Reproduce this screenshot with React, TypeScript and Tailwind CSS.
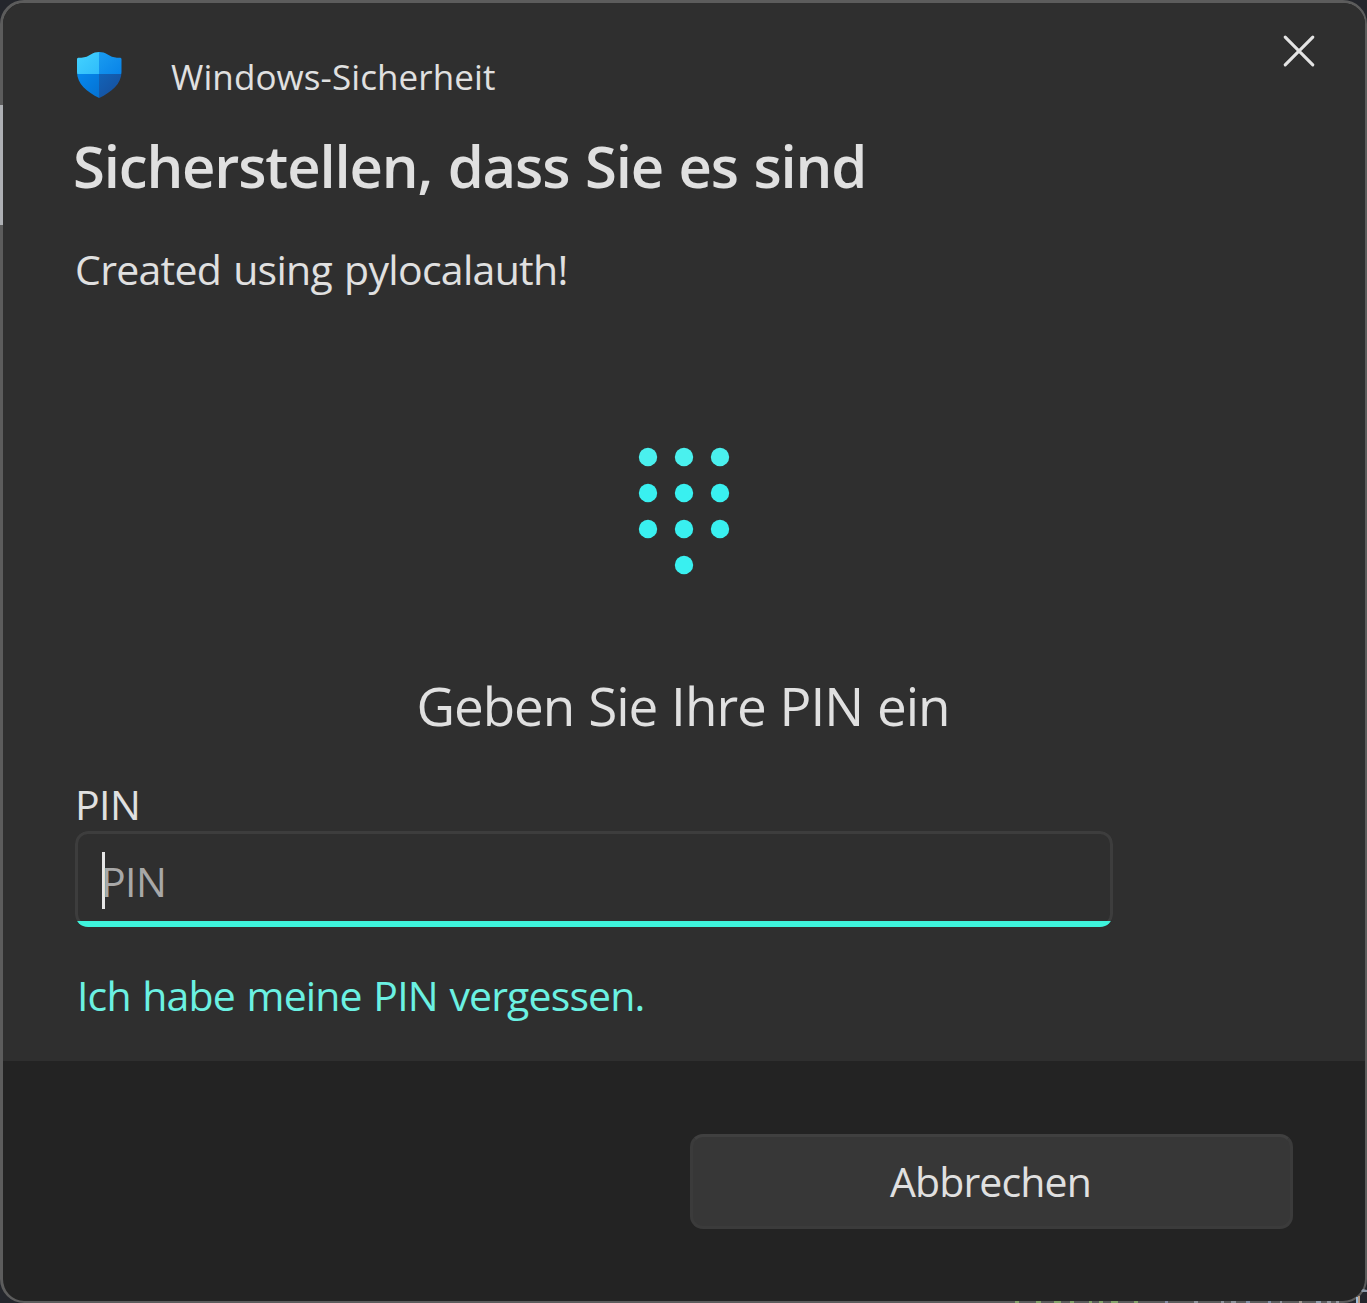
import React from "react";

const dots: [number, number][] = [
  [0, 0], [1, 0], [2, 0],
  [0, 1], [1, 1], [2, 1],
  [0, 2], [1, 2], [2, 2],
  [1, 3],
];

// Slivers of the editor window behind the dialog, visible along its lower edge: x, width, colour
const slivers: [number, number, string][] = [
  [10, 4, "#84a36b"], [31, 5, "#84a36b"], [49, 7, "#84a36b"], [65, 4, "#84a36b"],
  [84, 3, "#84a36b"], [94, 4, "#84a36b"], [106, 7, "#84a36b"], [129, 4, "#84a36b"],
  [160, 3, "#858ca6"], [189, 4, "#8f949c"], [216, 3, "#8f949c"], [226, 5, "#8f949c"],
  [241, 4, "#8290a6"], [263, 3, "#8290a6"], [275, 2, "#8f949c"], [294, 3, "#a09890"],
  [311, 5, "#8f9cab"], [322, 4, "#8f949c"], [331, 3, "#8f949c"],
];

function ShieldIcon() {
  return (
    <svg className="h-[46px] w-[45px] shrink-0" viewBox="0 0 45 46">
      <defs>
        <linearGradient id="tl" x1="0" y1="0" x2="1" y2="1">
          <stop offset="0" stopColor="#44d3ff" />
          <stop offset="1" stopColor="#2fbcfb" />
        </linearGradient>
        <linearGradient id="tr" x1="0" y1="0" x2="1" y2="1">
          <stop offset="0" stopColor="#1a9cf0" />
          <stop offset="1" stopColor="#0883e8" />
        </linearGradient>
        <linearGradient id="bl" x1="0" y1="0" x2="1" y2="1">
          <stop offset="0" stopColor="#0588ee" />
          <stop offset="1" stopColor="#0572d2" />
        </linearGradient>
        <linearGradient id="br" x1="0" y1="0" x2="1" y2="1">
          <stop offset="0" stopColor="#1263b8" />
          <stop offset="1" stopColor="#174c98" />
        </linearGradient>
        <clipPath id="shield">
          <path d="M22.2 0C25.5 0 27.8 0.8 30.2 2.3C33.3 4.3 36.3 5.6 40 5.7L43.4 5.8Q44.5 5.9 44.5 7.2V20C44.5 32 34.5 40 22.2 46C10 40 0 32 0 20V7.2Q0 5.9 1.1 5.8L4.5 5.7C8.2 5.6 11.2 4.3 14.2 2.3C16.6 0.8 19 0 22.2 0Z" />
        </clipPath>
      </defs>
      <g clipPath="url(#shield)">
        <rect width="22" height="22" fill="url(#tl)" />
        <rect x="22" width="23" height="22" fill="url(#tr)" />
        <rect y="22" width="22" height="24" fill="url(#bl)" />
        <rect x="22" y="22" width="23" height="24" fill="url(#br)" />
      </g>
    </svg>
  );
}

export default function App() {
  return (
    <div className="relative h-[1303px] w-[1367px] overflow-hidden bg-[#24262c] font-['Open_Sans',sans-serif] text-[#e0e0e0]">
      <div className="flex h-full flex-col overflow-hidden rounded-[24px] border-t-[3px] border-r-2 border-b-2 border-l-[3px] border-[#5c5c5c] bg-[#232323]">
        <main className="flex h-[1058px] flex-col bg-[#2f2f2f] pl-[72px]">
          <header className="flex h-[97px] justify-between pt-8 pr-[50px]">
            <div className="flex pt-[17px] pl-0.5">
              <ShieldIcon />
              <span className="ml-[49px] h-12 pt-px text-[35px] leading-[48px] tracking-[0.1px] whitespace-nowrap">Windows-Sicherheit</span>
            </div>
            <button aria-label="Schließen" className="h-8 w-8">
              <svg viewBox="0 0 32 32" className="h-8 w-8" stroke="#e4e4e4" strokeWidth="3.1" strokeLinecap="round">
                <path d="M2.2 2.2L29.8 29.8M29.8 2.2L2.2 29.8" />
              </svg>
            </button>
          </header>
          <h1 className="mt-[26px] -ml-0.5 h-20 text-[58px] leading-[80px] font-semibold tracking-[-1.15px] whitespace-nowrap [word-spacing:1.7px]">Sicherstellen, dass Sie es sind</h1>
          <p className="mt-[35px] h-14 text-[41px] leading-[56px] tracking-[-0.7px] whitespace-nowrap [word-spacing:2px]">Created using pylocalauth!</p>
          <div className="mt-[150px] flex pl-[563px]">
            <svg className="h-[128px] w-[92px]" viewBox="0 0 92 128">
              {dots.map(([c, r]) => (
                <circle key={`${c}-${r}`} cx={10 + c * 36} cy={10 + r * 36} r="9.2" fill={r === 0 ? "#4af0ee" : "#39f0f0"} />
              ))}
            </svg>
          </div>
          <h2 className="mt-[95px] h-[72px] pr-[74px] text-center text-[53px] leading-[72px] tracking-[-1px] whitespace-nowrap [word-spacing:1px]">Geben Sie Ihre PIN ein</h2>
          <label className="mt-[38px] h-12 text-[41px] leading-[48px] tracking-[-0.6px]">PIN</label>
          <div className="relative mt-[3px] flex h-24 w-[1038px] items-center overflow-hidden rounded-[13px] pt-0.5 pl-[27px]">
            <span className="absolute inset-0 rounded-[13px] border-[3px] border-[#3d3d3d]" />
            <span className="h-[57px] w-[3px] bg-[#e6e6e6]" />
            <span className="-ml-[4px] pt-[3px] text-[41px] leading-[57px] tracking-[-0.6px] text-[#a8a8a8]">PIN</span>
            <span className="absolute inset-x-0.5 bottom-0 h-1.5 rounded-b-[10px] bg-[#3ef4dc]" />
          </div>
          <a className="mt-10 h-14 pl-0.5 text-[41px] leading-[56px] tracking-[-0.85px] whitespace-nowrap text-[#6bf1e2] [word-spacing:1.8px]">Ich habe meine PIN vergessen.</a>
        </main>
        <footer className="flex flex-1 justify-end pt-[73px] pr-[72px]">
          <button className="h-[95px] w-[603px] rounded-[13px] border-[3px] border-[#3b3b3b] border-t-[#404040] bg-[#373737] pr-0.5 text-[41px] leading-[89px] tracking-[-0.85px]">Abbrechen</button>
        </footer>
      </div>
      <span className="absolute top-[105px] left-0 h-[120px] w-[3px] bg-[#aeb0b4]" />
      <svg className="absolute right-0 bottom-0 h-4 w-[362px]" viewBox="0 0 362 16">
        {slivers.map(([x, w, c]) => (
          <rect key={x} x={x} y="14" width={w} height="2" fill={c} />
        ))}
        <rect x="351" y="10" width="2" height="6" fill="#9dbbd8" />
        <rect x="353" y="9" width="2" height="7" fill="#b99a80" />
        <path d="M356 4L358 2L362 3V5H357Z" fill="#8b97a6" />
      </svg>
    </div>
  );
}
